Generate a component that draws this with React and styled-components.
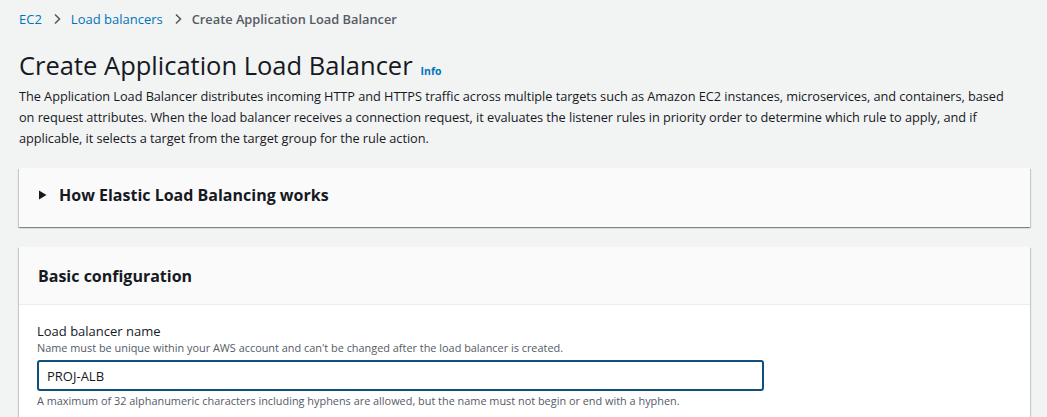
import React from 'react';
import styled, { createGlobalStyle } from 'styled-components';

const GlobalStyle = createGlobalStyle`
  body {
    margin: 0;
    background: #f2f3f3;
    font-family: "Open Sans", "Noto Sans", sans-serif;
    color: #16191f;
  }
`;

const Page = styled.div`
  padding: 9px 17px 0 19px;
  height: 417px;
  overflow: hidden;
  box-sizing: border-box;
`;

const Crumbs = styled.nav`
  display: flex;
  align-items: center;
  font-size: 13px;
  height: 20px;
`;

const CrumbLink = styled.a`
  color: #0073bb;
  text-decoration: none;
`;

const CrumbCurrent = styled.span`
  color: #545b64;
  font-weight: 600;
  font-size: 12.8px;
`;

const Chevron = styled.svg`
  width: 12px;
  height: 12px;
  margin: 0 8px 0 9px;
`;

const TitleRow = styled.div`
  display: flex;
  align-items: baseline;
  margin-top: 21px;
`;

const Title = styled.h1`
  margin: 0;
  font-size: 25.5px;
  font-weight: 400;
  line-height: 30px;
`;

const InfoLink = styled.a`
  margin-left: 8px;
  font-size: 10.5px;
  font-weight: 700;
  color: #0073bb;
`;

const Description = styled.p`
  margin: 6px 0 0;
  max-width: 995px;
  font-size: 12.75px;
  letter-spacing: -0.05px;
  line-height: 21px;
  color: #16191f;
`;

const Panel = styled.section`
  background: #fafafa;
  box-shadow: 0 1px 1px 0 rgba(0, 28, 36, 0.3), 1px 1px 1px 0 rgba(0, 28, 36, 0.15), -1px 1px 1px 0 rgba(0, 28, 36, 0.15);
  margin-top: ${p => p.$top}px;
`;

const Expander = styled.div`
  display: flex;
  align-items: center;
  box-sizing: border-box;
  height: 59px;
  padding: 0 0 6px 19px;
  font-size: 16px;
  font-weight: 700;
`;

const Caret = styled.svg`
  width: 9px;
  height: 10px;
  margin-right: 12px;
`;

const PanelHeader = styled.div`
  height: 57px;
  display: flex;
  align-items: center;
  padding-left: 19px;
  font-size: 16px;
  font-weight: 700;
  border-bottom: 1px solid #eaeded;
`;

const PanelBody = styled.div`
  background: #fff;
  padding: 17px 18px 20px;
`;

const Label = styled.label`
  display: block;
  font-size: 13px;
  line-height: 18px;
`;

const Hint = styled.div`
  font-size: 10.9px;
  line-height: 16px;
  color: #545b64;
`;

const Input = styled.input`
  display: block;
  box-sizing: border-box;
  width: 727px;
  height: 31px;
  margin: 4px 0 2px;
  padding: 0 8px;
  border: 2px solid #0f4f7c;
  border-radius: 3px;
  font-family: inherit;
  font-size: 13px;
  color: #16191f;
  background: #fff;
  outline: none;
`;

const ChevronIcon = () => (
  <Chevron viewBox="0 0 12 12">
    <path d="M4 1.5 L8.5 6 L4 10.5" fill="none" stroke="#545b64" strokeWidth="1.6" />
  </Chevron>
);

export default function App() {
  return (
    <>
      <GlobalStyle />
      <Page>
        <Crumbs>
          <CrumbLink href="#">EC2</CrumbLink>
          <ChevronIcon />
          <CrumbLink href="#">Load balancers</CrumbLink>
          <ChevronIcon />
          <CrumbCurrent>Create Application Load Balancer</CrumbCurrent>
        </Crumbs>
        <TitleRow>
          <Title>Create Application Load Balancer</Title>
          <InfoLink>Info</InfoLink>
        </TitleRow>
        <Description>
          The Application Load Balancer distributes incoming HTTP and HTTPS traffic across multiple targets such as Amazon EC2 instances, microservices, and containers, based on request attributes. When the load balancer receives a connection request, it evaluates the listener rules in priority order to determine which rule to apply, and if applicable, it selects a target from the target group for the rule action.
        </Description>
        <Panel $top={19}>
          <Expander>
            <Caret viewBox="0 0 9 10">
              <path d="M1 0.5 L8.5 5 L1 9.5 Z" fill="#16191f" />
            </Caret>
            How Elastic Load Balancing works
          </Expander>
        </Panel>
        <Panel $top={20}>
          <PanelHeader>Basic configuration</PanelHeader>
          <PanelBody>
            <Label>Load balancer name</Label>
            <Hint>Name must be unique within your AWS account and can't be changed after the load balancer is created.</Hint>
            <Input defaultValue="PROJ-ALB" />
            <Hint>A maximum of 32 alphanumeric characters including hyphens are allowed, but the name must not begin or end with a hyphen.</Hint>
          </PanelBody>
        </Panel>
      </Page>
    </>
  );
}
